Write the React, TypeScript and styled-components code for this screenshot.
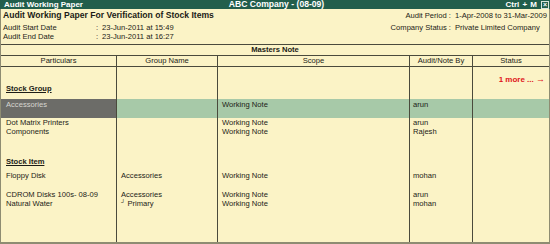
import React from "react";
import styled, { createGlobalStyle } from "styled-components";

const GlobalStyle = createGlobalStyle`
  html, body {
    margin: 0;
    padding: 0;
    background: #fbf3c6;
  }
  body {
    font-family: "Liberation Sans", Arial, sans-serif;
    font-size: 7.6px;
    color: #1c1c16;
  }
`;

const COLS = "116px 101px 192px 63px 1fr";
const LINE = "#4a4a3c";
const FRAME = "#8e8c72";

interface IRow {
  height: number;
  top?: number;
  cells: string[];
  section?: boolean;
  highlight?: boolean;
  more?: boolean;
  sub?: string;
}

const rows: IRow[] = [
  { height: 17, top: 8, cells: ["", "", "", "", ""], more: true },
  { height: 15, cells: ["Stock Group", "", "", "", ""], section: true },
  { height: 19, top: 1, cells: ["Accessories", "", "Working Note", "arun", ""], highlight: true },
  { height: 9, cells: ["Dot Matrix Printers", "", "Working Note", "arun", ""] },
  { height: 9, cells: ["Components", "", "Working Note", "Rajesh", ""] },
  { height: 30, top: 21, cells: ["Stock Item", "", "", "", ""], section: true },
  { height: 14, top: 5, cells: ["Floppy Disk", "Accessories", "Working Note", "mohan", ""] },
  { height: 19, top: 10, cells: ["CDROM Disks 100s- 08-09", "Accessories", "Working Note", "arun", ""] },
  { height: 9, cells: ["Natural Water", "", "Working Note", "mohan", ""], sub: "Primary" },
];

const App: React.FC = () => {
  return (
    <>
      <GlobalStyle />
      <Frame>
        <TitleBar>
          <TitleLeft>Audit Working Paper</TitleLeft>
          <TitleCenter>ABC Company - (08-09)</TitleCenter>
          <TitleRight>
            <span>Ctrl + M</span>
            <CloseBox>×</CloseBox>
          </TitleRight>
        </TitleBar>
        <Panel>
          <Header>
            <LeftMeta>
              <Heading>Audit Working Paper For Verification of Stock Items</Heading>
              <MetaRow>
                <MetaLabel>Audit Start Date</MetaLabel>
                <Colon>:</Colon>
                <span>23-Jun-2011 at 15:49</span>
              </MetaRow>
              <MetaRow>
                <MetaLabel>Audit End Date</MetaLabel>
                <Colon>:</Colon>
                <span>23-Jun-2011 at 16:27</span>
              </MetaRow>
            </LeftMeta>
            <RightMeta>
              <RightLabel>Audit Period :</RightLabel>
              <span>1-Apr-2008 to 31-Mar-2009</span>
              <RightLabel>Company Status :</RightLabel>
              <span>Private Limited Company</span>
            </RightMeta>
          </Header>
          <MastersBar>Masters Note</MastersBar>
          <ColumnHead>
            <HeadCell>Particulars</HeadCell>
            <HeadCell>Group Name</HeadCell>
            <HeadCell>Scope</HeadCell>
            <HeadCell>Audit/Note By</HeadCell>
            <HeadCell $last>Status</HeadCell>
          </ColumnHead>
          <Body>
            {rows.map((row, idx) => (
              <Row key={idx} $height={row.height} $top={row.top ?? 0} $highlight={!!row.highlight}>
                <Cell $pad={5} $dark={!!row.highlight}>
                  {row.section ? <Section>{row.cells[0]}</Section> : row.cells[0]}
                </Cell>
                <Cell $pad={4}>
                  {row.cells[1]}
                  {row.sub && (
                    <>
                      <Hook>┘</Hook> {row.sub}
                    </>
                  )}
                </Cell>
                <Cell $pad={4}>{row.cells[2]}</Cell>
                <Cell $pad={3}>{row.cells[3]}</Cell>
                <Cell $pad={3} $last>
                  {row.more && (
                    <More>
                      1 more ... <Arrow>→</Arrow>
                    </More>
                  )}
                </Cell>
              </Row>
            ))}
            <Filler>
              <Cell />
              <Cell />
              <Cell />
              <Cell />
              <Cell $last />
            </Filler>
          </Body>
        </Panel>
      </Frame>
    </>
  );
};

export default App;

const Frame = styled.div`
  width: 550px;
  height: 244px;
  display: flex;
  flex-direction: column;
  background: #fbf3c6;
  overflow: hidden;
`;

const TitleBar = styled.div`
  height: 9px;
  display: grid;
  grid-template-columns: 1fr auto 1fr;
  align-items: center;
  padding: 0 1px 0 4px;
  background: #225e4c;
  color: #ffffff;
  font-weight: bold;
  font-size: 8px;
  line-height: 9px;
`;

const TitleLeft = styled.span``;

const TitleCenter = styled.span`
  text-align: center;
  font-size: 8.6px;
`;

const TitleRight = styled.div`
  display: flex;
  justify-content: flex-end;
  align-items: center;
  gap: 4px;
  word-spacing: 1px;
`;

const CloseBox = styled.span`
  width: 6px;
  height: 6px;
  border: 1px solid #d8e4dc;
  display: flex;
  align-items: center;
  justify-content: center;
  font-size: 7px;
  line-height: 6px;
`;

const Panel = styled.div`
  flex: 1;
  display: flex;
  flex-direction: column;
  border-left: 1px solid ${FRAME};
  border-right: 1px solid ${FRAME};
  border-bottom: 2px solid ${FRAME};
  min-height: 0;
`;

const Header = styled.div`
  height: 35px;
  box-sizing: border-box;
  padding: 2px 2px 0 2px;
  display: flex;
  justify-content: space-between;
  line-height: 9px;
`;

const LeftMeta = styled.div`
  display: flex;
  flex-direction: column;
`;

const Heading = styled.div`
  font-weight: bold;
  font-size: 8.6px;
  margin-bottom: 3px;
`;

const MetaRow = styled.div`
  display: flex;
`;

const MetaLabel = styled.span`
  width: 93px;
`;

const Colon = styled.span`
  width: 6px;
`;

const RightMeta = styled.div`
  display: grid;
  grid-template-columns: auto auto;
  column-gap: 4px;
  row-gap: 3px;
  align-content: start;
`;

const RightLabel = styled.span`
  text-align: right;
`;

const MastersBar = styled.div`
  height: 10px;
  border-top: 1px solid ${LINE};
  text-align: center;
  font-weight: bold;
  line-height: 10px;
`;

const ColumnHead = styled.div`
  display: grid;
  grid-template-columns: ${COLS};
  height: 12px;
  box-sizing: border-box;
  border-top: 1px solid ${LINE};
  border-bottom: 1px solid ${LINE};
`;

const HeadCell = styled.div<{ $last?: boolean }>`
  text-align: center;
  line-height: 10px;
  border-right: ${({ $last }) => ($last ? "none" : `1px solid ${LINE}`)};
`;

const Body = styled.div`
  flex: 1;
  display: flex;
  flex-direction: column;
`;

const Row = styled.div<{ $height: number; $top: number; $highlight: boolean }>`
  display: grid;
  grid-template-columns: ${COLS};
  height: ${({ $height }) => $height}px;
  background: ${({ $highlight }) => ($highlight ? "#a7c9a8" : "transparent")};
  line-height: 9px;
  & > div {
    padding-top: ${({ $top }) => $top}px;
  }
`;

const Filler = styled.div`
  flex: 1;
  display: grid;
  grid-template-columns: ${COLS};
`;

const Cell = styled.div<{ $pad?: number; $dark?: boolean; $last?: boolean }>`
  box-sizing: border-box;
  padding-left: ${({ $pad }) => $pad ?? 0}px;
  white-space: nowrap;
  overflow: hidden;
  border-right: ${({ $last }) => ($last ? "none" : `1px solid ${LINE}`)};
  background: ${({ $dark }) => ($dark ? "#6c6c68" : "transparent")};
  color: ${({ $dark }) => ($dark ? "#d6d6d0" : "inherit")};
  text-align: ${({ $last }) => ($last ? "right" : "left")};
  padding-right: ${({ $last }) => ($last ? 4 : 0)}px;
`;

const Section = styled.span`
  font-weight: bold;
  text-decoration: underline;
`;

const Hook = styled.span`
  font-size: 6px;
  vertical-align: top;
  line-height: 6px;
`;

const More = styled.span`
  color: #e0141c;
  font-weight: bold;
  font-size: 8px;
`;

const Arrow = styled.span`
  font-size: 9px;
`;
